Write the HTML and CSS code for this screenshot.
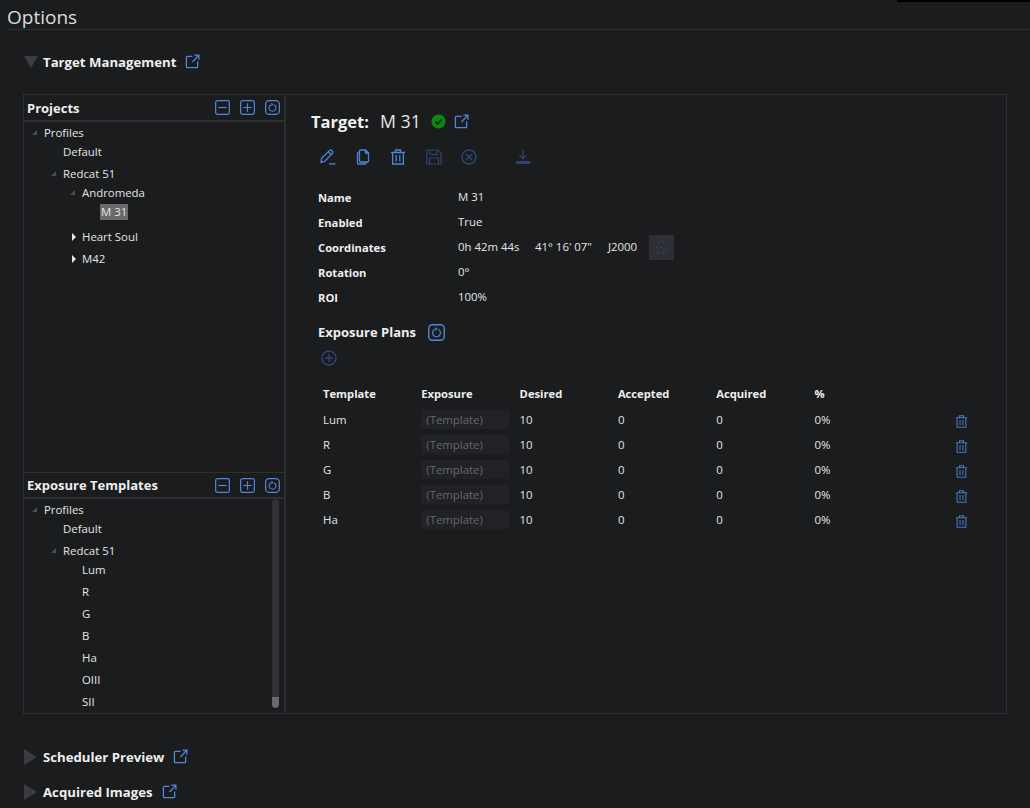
FILE: index.html
```html
<!DOCTYPE html>
<html lang="en">
<head>
    <meta charset="UTF-8">
    <meta name="viewport" content="width=device-width, initial-scale=1.0">
    <title>Options</title>
    <link rel="stylesheet" href="styles.css">
</head>
<body>
    <svg class="defs" width="0" height="0">
        <symbol id="i-link" viewBox="0 0 16 16"><path d="M8 2.5H2.5a1 1 0 0 0-1 1v10a1 1 0 0 0 1 1h10a1 1 0 0 0 1-1V8M8 8.5 14.5 1.5M10 1.2h4.8V6" fill="none" stroke="currentColor" stroke-width="1.4"/></symbol>
        <symbol id="i-minus" viewBox="0 0 16 16"><rect x=".7" y=".7" width="14.6" height="14.6" rx="2" fill="none" stroke="currentColor" stroke-width="1.3"/><path d="M3.5 8h9" stroke="currentColor" stroke-width="1.3"/></symbol>
        <symbol id="i-plus" viewBox="0 0 16 16"><rect x=".7" y=".7" width="14.6" height="14.6" rx="2" fill="none" stroke="currentColor" stroke-width="1.3"/><path d="M3.5 8h9M8 3.5v9" stroke="currentColor" stroke-width="1.3"/></symbol>
        <symbol id="i-refresh" viewBox="0 0 16 16"><rect x=".7" y=".7" width="14.6" height="14.6" rx="3.5" fill="none" stroke="currentColor" stroke-width="1.3"/><path d="M6.3 5a3.7 3.7 0 1 0 3.4 0M6.6 3.6 8.2 4.6 6.8 6" fill="none" stroke="currentColor" stroke-width="1.1"/></symbol>
        <symbol id="i-pencil" viewBox="0 0 16 16"><path d="M1 13.4 1.6 9.4 9.6 1.4a1.4 1.4 0 0 1 2 0l.9.9a1.4 1.4 0 0 1 0 2L4.6 12.4ZM8.3 2.8l3 3M9 14.8h6.5" fill="none" stroke="currentColor" stroke-width="1.3"/></symbol>
        <symbol id="i-copy" viewBox="0 0 16 16"><path d="M5.500 1h5l3 3v8a1 1 0 0 1-1 1h-7a1 1 0 0 1-1-1V2a1 1 0 0 1 1-1ZM4.500 3.400h-1a1 1 0 0 0-1 1V14a1 1 0 0 0 1 1h6.500a1 1 0 0 0 1-1v-1M10.500 1v3h3" fill="none" stroke="currentColor" stroke-width="1.3"/></symbol>
        <symbol id="i-trash" viewBox="0 0 16 16"><path d="M1 3.500h14M5.500 3.500V1h5v2.500M2.600 3.500V15h10.800V3.500M6.200 6v6.500M9.800 6v6.500" fill="none" stroke="currentColor" stroke-width="1.3"/></symbol>
        <symbol id="i-save" viewBox="0 0 16 16"><path d="M1 1h11l3 3v11H1ZM4 1v4.500h7V1M3.500 15V9h9v6" fill="none" stroke="currentColor" stroke-width="1.2"/></symbol>
        <symbol id="i-cancel" viewBox="0 0 16 16"><circle cx="8" cy="8" r="7" fill="none" stroke="currentColor" stroke-width="1.5"/><path d="M5 5l6 6M11 5l-6 6" stroke="currentColor" stroke-width="1.5"/></symbol>
        <symbol id="i-download" viewBox="0 0 16 16"><path d="M8 1v8M4.500 6 8 9.500 11.500 6" fill="none" stroke="currentColor" stroke-width="1.3"/><path d="M1 12h14v3H1Z" fill="currentColor"/></symbol>
        <symbol id="i-add" viewBox="0 0 16 16"><circle cx="8" cy="8" r="7" fill="none" stroke="currentColor" stroke-width="1.5"/><path d="M4 8h8M8 4v8" stroke="currentColor" stroke-width="1.5"/></symbol>
    </svg>

    <div class="topbar"></div>
    <h1 class="page-title">Options</h1>

    <main class="content">
        <div class="section-head">
            <span class="tri-down"></span>
            <span class="section-name">Target Management</span>
            <svg class="ico ico-link"><use href="#i-link"/></svg>
        </div>

        <div class="panel">
            <div class="side">
                <div class="tree-box tree-projects">
                    <div class="tree-head">
                        <span class="tree-title">Projects</span>
                        <div class="head-icons">
                            <svg class="ico"><use href="#i-minus"/></svg>
                            <svg class="ico"><use href="#i-plus"/></svg>
                            <svg class="ico"><use href="#i-refresh"/></svg>
                        </div>
                    </div>
                    <div class="tree-body">
                        <div class="tree-row lv0"><span class="exp"><i class="open"></i></span>Profiles</div>
                        <div class="tree-row lv1"><span class="exp"></span>Default</div>
                        <div class="tree-row lv1 gap3"><span class="exp"><i class="open"></i></span>Redcat 51</div>
                        <div class="tree-row lv2"><span class="exp"><i class="open"></i></span>Andromeda</div>
                        <div class="tree-row lv3"><span class="exp"></span><span class="selected">M 31</span></div>
                        <div class="tree-row lv2 gap6"><span class="exp"><i class="closed"></i></span>Heart Soul</div>
                        <div class="tree-row lv2 gap3"><span class="exp"><i class="closed"></i></span>M42</div>
                    </div>
                </div>
                <div class="tree-box tree-templates">
                    <div class="tree-head">
                        <span class="tree-title">Exposure Templates</span>
                        <div class="head-icons">
                            <svg class="ico"><use href="#i-minus"/></svg>
                            <svg class="ico"><use href="#i-plus"/></svg>
                            <svg class="ico"><use href="#i-refresh"/></svg>
                        </div>
                    </div>
                    <div class="tree-body">
                        <div class="tree-row lv0"><span class="exp"><i class="open"></i></span>Profiles</div>
                        <div class="tree-row lv1"><span class="exp"></span>Default</div>
                        <div class="tree-row lv1 gap3"><span class="exp"><i class="open"></i></span>Redcat 51</div>
                        <div class="tree-row lv2"><span class="exp"></span>Lum</div>
                        <div class="tree-row lv2 gap3"><span class="exp"></span>R</div>
                        <div class="tree-row lv2 gap3"><span class="exp"></span>G</div>
                        <div class="tree-row lv2 gap3"><span class="exp"></span>B</div>
                        <div class="tree-row lv2 gap3"><span class="exp"></span>Ha</div>
                        <div class="tree-row lv2 gap3"><span class="exp"></span>OIII</div>
                        <div class="tree-row lv2 gap3"><span class="exp"></span>SII</div>
                    </div>
                    <div class="scrollbar"><div class="scroll-thumb"></div></div>
                </div>
            </div>

            <div class="detail">
                <div class="target-title">
                    <span class="target-label">Target:</span>
                    <span class="target-name">M 31</span>
                    <svg class="status-ok" viewBox="0 0 16 16"><circle cx="8" cy="8" r="7.5" fill="#0a8a0a"/><path d="M4.600 8.200 7 10.600l4.400-4.600" fill="none" stroke="#1b1c1e" stroke-width="2"/></svg>
                    <svg class="ico ico-link"><use href="#i-link"/></svg>
                </div>

                <div class="toolbar">
                    <svg class="tool"><use href="#i-pencil"/></svg>
                    <svg class="tool"><use href="#i-copy"/></svg>
                    <svg class="tool"><use href="#i-trash"/></svg>
                    <svg class="tool dim"><use href="#i-save"/></svg>
                    <svg class="tool dim"><use href="#i-cancel"/></svg>
                    <svg class="tool dim tool-far"><use href="#i-download"/></svg>
                </div>

                <div class="props">
                    <div class="prop"><span class="prop-name">Name</span><span class="prop-val">M 31</span></div>
                    <div class="prop"><span class="prop-name">Enabled</span><span class="prop-val">True</span></div>
                    <div class="prop">
                        <span class="prop-name">Coordinates</span>
                        <span class="prop-val coords">
                            <span class="coord-ra">0h 42m 44s</span>
                            <span class="coord-dec">41° 16' 07"</span>
                            <span class="coord-ep">J2000</span>
                            <span class="coord-btn">
                                <svg class="sky" viewBox="0 0 16 16"><g fill="#34507f"><circle cx="3" cy="8" r=".7"/><circle cx="6" cy="3" r=".7"/><circle cx="10" cy="2.500" r=".7"/><circle cx="13" cy="6" r=".7"/><circle cx="13.500" cy="10" r=".7"/><circle cx="10" cy="13" r=".7"/><circle cx="5" cy="13" r=".7"/><circle cx="8" cy="8" r=".7"/><circle cx="5.500" cy="6.500" r=".6"/><circle cx="10.500" cy="9" r=".6"/></g></svg>
                            </span>
                        </span>
                    </div>
                    <div class="prop"><span class="prop-name">Rotation</span><span class="prop-val">0°</span></div>
                    <div class="prop"><span class="prop-name">ROI</span><span class="prop-val">100%</span></div>
                </div>

                <div class="plans-head">
                    <span class="plans-title">Exposure Plans</span>
                    <svg class="ico ico-plans"><use href="#i-refresh"/></svg>
                </div>
                <svg class="tool dim add-plan"><use href="#i-add"/></svg>

                <div class="plans">
                    <div class="plan-row plan-head">
                        <span>Template</span><span>Exposure</span><span>Desired</span><span>Accepted</span><span>Acquired</span><span>%</span><span></span>
                    </div>
                    <div class="plan-row"><span>Lum</span><span class="tpl">(Template)</span><span>10</span><span>0</span><span>0</span><span>0%</span><svg class="row-trash"><use href="#i-trash"/></svg></div>
                    <div class="plan-row"><span>R</span><span class="tpl">(Template)</span><span>10</span><span>0</span><span>0</span><span>0%</span><svg class="row-trash"><use href="#i-trash"/></svg></div>
                    <div class="plan-row"><span>G</span><span class="tpl">(Template)</span><span>10</span><span>0</span><span>0</span><span>0%</span><svg class="row-trash"><use href="#i-trash"/></svg></div>
                    <div class="plan-row"><span>B</span><span class="tpl">(Template)</span><span>10</span><span>0</span><span>0</span><span>0%</span><svg class="row-trash"><use href="#i-trash"/></svg></div>
                    <div class="plan-row"><span>Ha</span><span class="tpl">(Template)</span><span>10</span><span>0</span><span>0</span><span>0%</span><svg class="row-trash"><use href="#i-trash"/></svg></div>
                </div>
            </div>
        </div>

        <div class="section-head section-closed">
            <span class="tri-right"></span>
            <span class="section-name">Scheduler Preview</span>
            <svg class="ico ico-link"><use href="#i-link"/></svg>
        </div>
        <div class="section-head section-closed section-last">
            <span class="tri-right"></span>
            <span class="section-name">Acquired Images</span>
            <svg class="ico ico-link"><use href="#i-link"/></svg>
        </div>
    </main>
</body>
</html>
```

FILE: styles.css
```css
html, body {
    height: 100%;
}
body {
    margin: 0;
    overflow: hidden;
    position: relative;
    font-family: "Open Sans", "Noto Sans", Arial, sans-serif;
    font-size: 11.4px;
    color: #e4e4e4;
    background-color: #1b1c1e;
}
.defs {
    position: absolute;
}
.topbar {
    position: absolute;
    top: 0;
    right: 0;
    width: 133px;
    height: 2px;
    background: #000;
}
.page-title {
    margin: 0 0 0 7px;
    height: 29px;
    line-height: 34px;
    font-size: 19px;
    font-weight: 400;
    color: #dcdcdc;
    border-bottom: 1px solid #2e2f32;
}
.content {
    padding: 0 23px;
}
.ico {
    width: 15px;
    height: 15px;
    color: #5086dc;
    flex: none;
}
.section-head {
    display: flex;
    align-items: center;
    height: 30px;
    margin-top: 17px;
    padding-left: 1px;
}
.section-name {
    font-size: 13.2px;
    font-weight: 700;
    color: #eee;
    margin-left: 5px;
}
.section-head .ico-link {
    margin-left: 9px;
    margin-top: -2px;
}
.tri-down {
    width: 0;
    height: 0;
    border-left: 7px solid transparent;
    border-right: 7px solid transparent;
    border-top: 12px solid #3a3c41;
}
.tri-right {
    width: 0;
    height: 0;
    border-top: 8px solid transparent;
    border-bottom: 8px solid transparent;
    border-left: 13px solid #3a3c41;
    margin-right: 1px;
}
.section-closed {
    margin-top: 28px;
}
.section-last {
    margin-top: 5px;
}
.panel {
    display: flex;
    height: 620px;
    box-sizing: border-box;
    margin-top: 17px;
    width: 984px;
    border: 1px solid #2e2f32;
}
.side {
    width: 260px;
    flex: none;
    display: flex;
    flex-direction: column;
    border-right: 2px solid #2e2f32;
}
.tree-box {
    position: relative;
    overflow: hidden;
}
.tree-projects {
    height: 377px;
}
.tree-templates {
    flex: 1;
}
.tree-head {
    display: flex;
    justify-content: space-between;
    align-items: center;
    height: 27px;
    padding: 0 4px 0 3px;
    box-sizing: border-box;
    border: 1px solid #2e2f32;
    border-width: 0 0 2px;
}
.tree-templates .tree-head {
    border-top-width: 1px;
}
.tree-title {
    font-size: 13px;
    font-weight: 700;
    color: #eee;
}
.head-icons {
    display: flex;
    gap: 10px;
}
.tree-body {
    padding-top: 1px;
}
.tree-row {
    display: flex;
    align-items: center;
    height: 19px;
    white-space: nowrap;
}
.gap3 {
    margin-top: 3px;
}
.gap6 {
    margin-top: 6px;
}
.lv0 { padding-left: 1px; }
.lv1 { padding-left: 20px; }
.lv2 { padding-left: 39px; }
.lv3 { padding-left: 58px; }
.exp {
    width: 19px;
    flex: none;
    display: flex;
    justify-content: center;
}
.exp .open {
    width: 0;
    height: 0;
    border-left: 5px solid transparent;
    border-bottom: 5px solid #4c4d50;
}
.exp .closed {
    width: 0;
    height: 0;
    margin-left: 3px;
    border-top: 4px solid transparent;
    border-bottom: 4px solid transparent;
    border-left: 4px solid #e8e8e8;
}
.selected {
    background: #696a6c;
    padding: 0 1px;
    margin-left: -1px;
    line-height: 16px;
}
.scrollbar {
    position: absolute;
    right: 5px;
    top: 27px;
    bottom: 5px;
    width: 7px;
    border-radius: 4px;
    background: #2f3136;
    overflow: hidden;
}
.scroll-thumb {
    position: absolute;
    left: 0;
    right: 0;
    bottom: 0;
    height: 11px;
    border-radius: 0 0 4px 4px;
    background: #6a6b6d;
}
.detail {
    flex: 1;
    padding: 14px 0 0 25px;
    min-width: 0;
}
.target-title {
    display: flex;
    align-items: center;
    height: 24px;
}
.target-label {
    font-size: 16.5px;
    font-weight: 700;
    color: #f0f0f0;
}
.target-name {
    font-size: 17.8px;
    margin-left: 11px;
    width: 51px;
}
.status-ok {
    width: 15px;
    height: 15px;
}
.target-title .ico-link {
    margin-left: 8px;
}
.toolbar {
    display: flex;
    align-items: center;
    height: 18px;
    margin-top: 15px;
    padding-left: 9px;
    gap: 19.2px;
}
.tool {
    width: 16px;
    height: 16px;
    color: #4f83d8;
    flex: none;
}
.tool.dim {
    color: #2f4470;
}
.tool-far {
    margin-left: 19px;
}
.props {
    margin-top: 19px;
    padding-left: 7px;
}
.prop {
    display: flex;
    align-items: center;
    height: 25px;
}
.prop-name {
    width: 140px;
    font-size: 11.2px;
    font-weight: 700;
    color: #eee;
}
.prop-val {
    margin-top: -2px;
}
.coords {
    display: flex;
    align-items: center;
}
.coord-ra { width: 77px; }
.coord-dec { width: 73px; }
.coord-ep { width: 41px; }
.coord-btn {
    width: 25px;
    height: 25px;
    background: #2d2f34;
    display: flex;
    align-items: center;
    justify-content: center;
    margin-top: 2px;
}
.sky {
    width: 17px;
    height: 17px;
}
.plans-head {
    display: flex;
    align-items: center;
    height: 22px;
    margin-top: 11px;
    padding-left: 7px;
}
.plans-title {
    font-size: 13px;
    font-weight: 700;
    color: #eee;
}
.ico-plans {
    width: 17px;
    height: 17px;
    margin-left: 12px;
}
.add-plan {
    display: block;
    margin: 7px 0 0 10px;
}
.plans {
    margin-top: 15px;
    padding-left: 12px;
}
.plan-row {
    display: grid;
    grid-template-columns: 98.3px 98.3px 98.3px 98.3px 98.3px 141px 14px;
    align-items: center;
    height: 25px;
}
.plan-head {
    font-size: 11.2px;
    font-weight: 700;
    color: #eee;
    margin-bottom: 1px;
}
.tpl {
    display: block;
    width: 88px;
    height: 19px;
    line-height: 19px;
    padding-left: 5px;
    box-sizing: border-box;
    background: #202225;
    color: #66686b;
}
.row-trash {
    width: 13px;
    height: 13px;
    color: #4878c6;
    margin-top: 4px;
}
```
